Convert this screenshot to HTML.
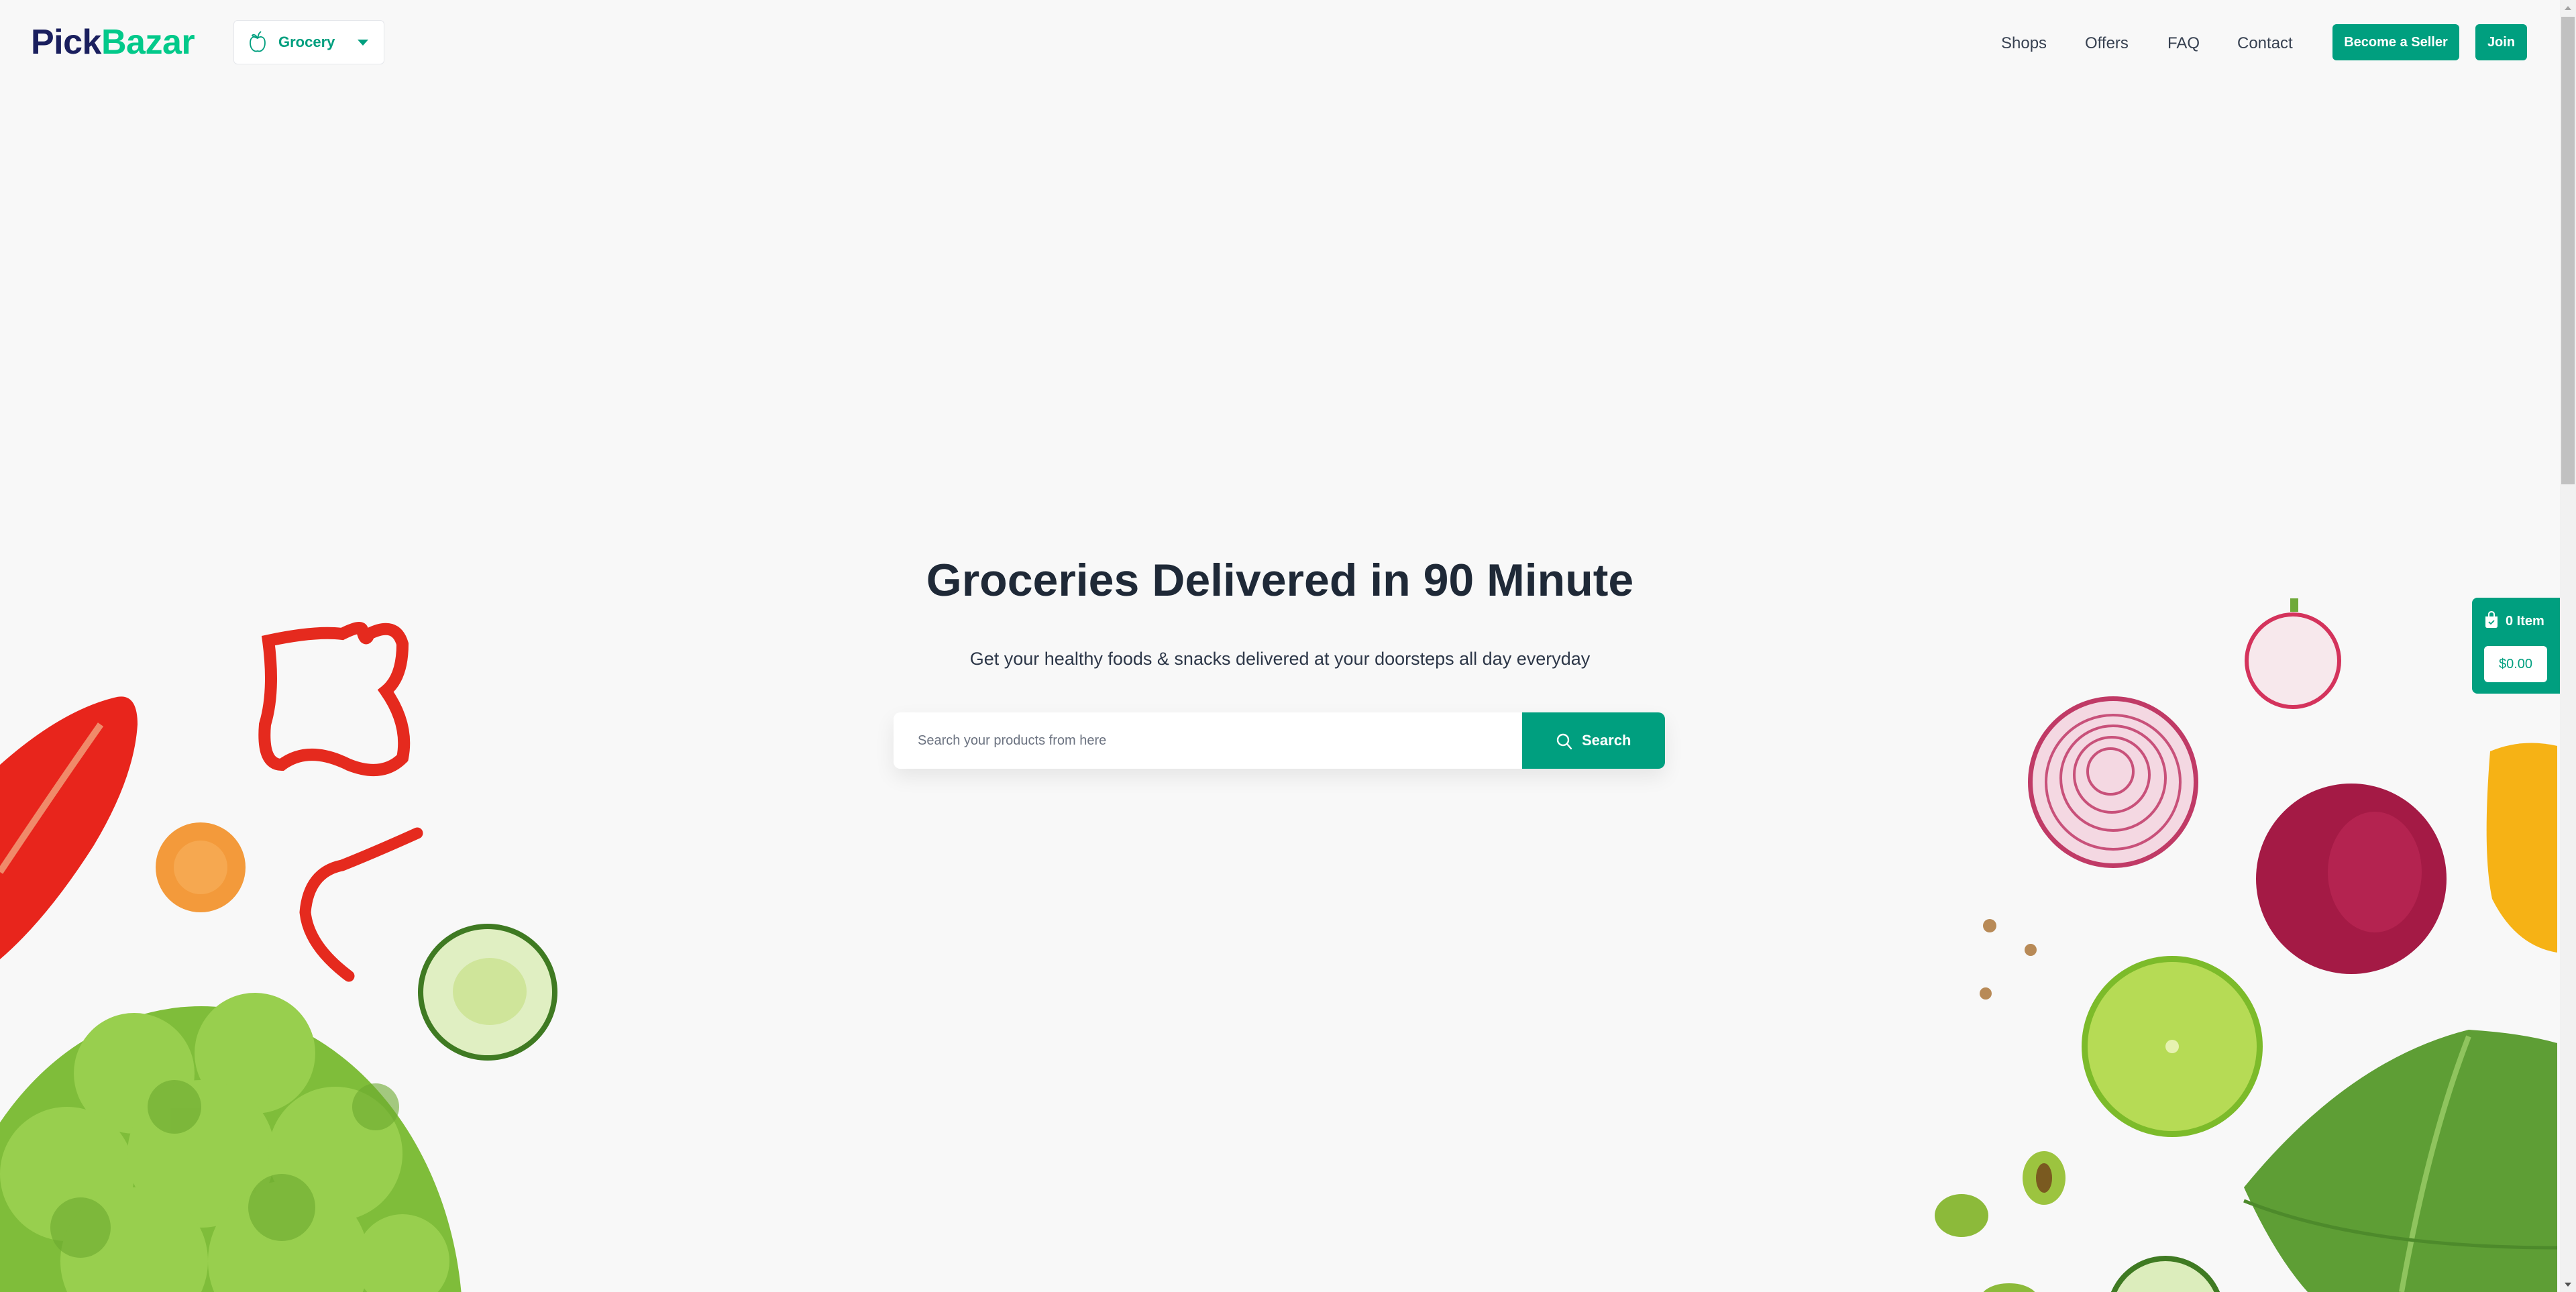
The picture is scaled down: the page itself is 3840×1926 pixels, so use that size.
<!DOCTYPE html>
<html><head><meta charset="utf-8"><style>
html,body{margin:0;padding:0;overflow:hidden;}
body{width:3840px;height:1926px;overflow:hidden;background:#f8f8f8;font-family:"Liberation Sans",sans-serif;position:relative;}
.abs{position:absolute;}
.nav{position:absolute;top:50px;font-size:24px;color:#374151;line-height:30px;}
.btn{position:absolute;top:36px;height:54px;background:#009f7f;border-radius:6px;color:#fff;font-weight:bold;font-size:20px;line-height:54px;text-align:center;}
</style></head><body>
<svg class="abs" style="left:0;top:0;display:block" width="3816" height="1926" viewBox="0 0 3816 1926">
<!-- left side -->
<path d="M0 1140 Q90 1060 170 1040 Q205 1030 205 1080 Q200 1160 140 1260 Q70 1370 0 1430 Z" fill="#e8251c"/>
<path d="M0 1300 Q80 1180 150 1080" stroke="#f08a6a" stroke-width="10" fill="none"/>
<path d="M400 955 Q470 940 510 945 Q540 930 540 940 Q545 960 550 945 Q590 925 600 960 Q600 1010 575 1030 Q610 1080 600 1130 Q570 1160 520 1140 Q460 1110 420 1140 Q390 1140 395 1080 Q410 1030 400 955 Z" fill="none" stroke="#e52a1e" stroke-width="18"/>
<circle cx="299" cy="1293" r="67" fill="#f39a3b"/>
<circle cx="299" cy="1293" r="40" fill="#f6a850"/>
<path d="M622 1242 Q560 1270 510 1290 Q460 1300 455 1360 Q460 1410 520 1455" stroke="#e52a1e" stroke-width="17" fill="none" stroke-linecap="round"/>
<ellipse cx="727" cy="1479" rx="104" ry="102" fill="#3f7a22"/>
<ellipse cx="727" cy="1479" rx="96" ry="94" fill="#e0efc2"/>
<ellipse cx="730" cy="1478" rx="55" ry="50" fill="#cfe59a"/>
<ellipse cx="300" cy="1980" rx="390" ry="480" fill="#7fbd3a"/>
<g fill="#98cf4e">
<circle cx="200" cy="1600" r="90"/><circle cx="380" cy="1570" r="90"/><circle cx="100" cy="1750" r="100"/><circle cx="300" cy="1720" r="110"/><circle cx="500" cy="1720" r="100"/><circle cx="200" cy="1880" r="110"/><circle cx="430" cy="1880" r="120"/><circle cx="600" cy="1880" r="70"/></g>
<g fill="#6aa82e" opacity=".6"><circle cx="260" cy="1650" r="40"/><circle cx="420" cy="1800" r="50"/><circle cx="120" cy="1830" r="45"/><circle cx="560" cy="1650" r="35"/></g>
<!-- right side -->
<circle cx="3418" cy="985" r="72" fill="#d4335c"/>
<circle cx="3418" cy="985" r="66" fill="#f7e8ec"/>
<path d="M3420 912 l0 -20" stroke="#6fa93a" stroke-width="12"/>
<ellipse cx="3150" cy="1166" rx="127" ry="128" fill="#c03a66"/>
<ellipse cx="3150" cy="1166" rx="120" ry="121" fill="#f4d8e2"/>
<g fill="none" stroke="#c8517a" stroke-width="4"><ellipse cx="3150" cy="1166" rx="100" ry="100"/><ellipse cx="3150" cy="1160" rx="78" ry="78"/><ellipse cx="3148" cy="1155" rx="56" ry="56"/><ellipse cx="3146" cy="1150" rx="34" ry="34"/></g>
<ellipse cx="3505" cy="1310" rx="142" ry="142" fill="#a41a45"/>
<ellipse cx="3540" cy="1300" rx="70" ry="90" fill="#c02a58" opacity=".6"/>
<path d="M3712 1120 Q3760 1100 3812 1112 L3812 1420 Q3750 1410 3715 1340 Q3700 1270 3712 1120 Z" fill="#f6b215"/>
<circle cx="3238" cy="1560" r="135" fill="#7cbb2a"/>
<circle cx="3238" cy="1560" r="126" fill="#b6db55"/>
<circle cx="3238" cy="1560" r="10" fill="#e6f2b0"/>
<path d="M3345 1770 Q3500 1580 3680 1535 Q3760 1540 3812 1555 L3812 1926 L3440 1926 Q3390 1870 3345 1770 Z" fill="#5e9e35"/>
<path d="M3680 1545 Q3620 1700 3580 1926" stroke="#8fc45e" stroke-width="8" fill="none"/>
<path d="M3345 1790 Q3520 1860 3812 1860" stroke="#4d8a2b" stroke-width="5" fill="none"/>
<ellipse cx="2924" cy="1812" rx="40" ry="32" fill="#8cba3a"/>
<ellipse cx="3047" cy="1756" rx="32" ry="40" fill="#9cc43f"/>
<ellipse cx="3047" cy="1756" rx="12" ry="22" fill="#7a5a20"/>
<circle cx="2966" cy="1380" r="10" fill="#b88a57"/><circle cx="3027" cy="1416" r="9" fill="#b88a57"/><circle cx="2960" cy="1481" r="9" fill="#b88a57"/>
<circle cx="3228" cy="1960" r="88" fill="#3f7a22"/><circle cx="3228" cy="1960" r="80" fill="#dcedbc"/>
<ellipse cx="2995" cy="1935" rx="42" ry="22" fill="#8cba3a"/>
</svg>

<!-- header -->
<div class="abs" style="left:46px;top:32px;font-size:52px;font-weight:bold;letter-spacing:-0.5px;line-height:62px;"><span style="color:#1a1f5e">Pick</span><span style="color:#02c98a">Bazar</span></div>
<div class="abs" style="left:348px;top:30px;width:223px;height:64px;background:#fff;border:1px solid #e5e7eb;border-radius:6px;">
<svg class="abs" style="left:22px;top:14px" width="26" height="34" viewBox="0 0 26 34"><path d="M13 12 C8 8 2 10 2 19 C2 27 7 33 13 31 C19 33 24 27 24 19 C24 10 18 8 13 12 Z M13 12 L15 5 M13 12 C10 6 6 6 5 8 C8 11 11 11 13 12 M15 5 L18 2" fill="none" stroke="#009f7f" stroke-width="1.8"/></svg>
<span class="abs" style="left:66px;top:17px;font-size:22px;font-weight:bold;color:#009f7f;line-height:30px">Grocery</span>
<div class="abs" style="left:184px;top:28px;width:0;height:0;border-left:8px solid transparent;border-right:8px solid transparent;border-top:9px solid #009f7f"></div>
</div>
<div class="nav" style="left:2983px">Shops</div>
<div class="nav" style="left:3108px">Offers</div>
<div class="nav" style="left:3231px">FAQ</div>
<div class="nav" style="left:3335px">Contact</div>
<div class="btn" style="left:3477px;width:189px">Become a Seller</div>
<div class="btn" style="left:3690px;width:77px">Join</div>

<!-- scrollbar -->
<div class="abs" style="left:3816px;top:0;width:24px;height:1926px;background:#f1f1f1"></div>
<div class="abs" style="left:3818px;top:25px;width:20px;height:697px;background:#c1c1c1"></div>
<div class="abs" style="left:3823px;top:9px;width:0;height:0;border-left:5px solid transparent;border-right:5px solid transparent;border-bottom:6px solid #a3a3a3"></div>
<div class="abs" style="left:3823px;top:1912px;width:0;height:0;border-left:5px solid transparent;border-right:5px solid transparent;border-top:6px solid #505050"></div>

<!-- hero -->
<div class="abs" style="left:0;width:3816px;top:823px;text-align:center;font-size:68px;font-weight:bold;color:#1f2937;line-height:84px;">Groceries Delivered in 90 Minute</div>
<div class="abs" style="left:0;width:3816px;top:965px;text-align:center;font-size:27px;color:#2d3748;line-height:34px;">Get your healthy foods &amp; snacks delivered at your doorsteps all day everyday</div>
<div class="abs" style="left:1332px;top:1062px;width:1150px;height:84px;background:#fff;border-radius:10px;box-shadow:0 12px 30px rgba(0,0,0,.08);">
<span class="abs" style="left:36px;top:28px;font-size:20px;color:#6b7280;line-height:28px">Search your products from here</span>
<div class="abs" style="left:937px;top:0;width:213px;height:84px;background:#009f7f;border-radius:0 10px 10px 0;">
<svg class="abs" style="left:51px;top:31px" width="24" height="25" viewBox="0 0 24 25"><circle cx="10" cy="10" r="8" fill="none" stroke="#fff" stroke-width="2.4"/><path d="M16 16 L22 23" stroke="#fff" stroke-width="2.4" stroke-linecap="round"/></svg>
<span class="abs" style="left:89px;top:27px;font-size:22px;font-weight:bold;color:#fff;line-height:30px">Search</span>
</div></div>

<!-- cart -->
<div class="abs" style="left:3685px;top:891px;width:131px;height:143px;background:#009f7f;border-radius:8px 0 0 8px;">
<svg class="abs" style="left:19px;top:20px" width="20" height="26" viewBox="0 0 20 26"><path d="M1 8 H19 V22 Q19 25 16 25 H4 Q1 25 1 22 Z" fill="#fff"/><path d="M6 9 V5 Q6 1 10 1 Q14 1 14 5 V9" fill="none" stroke="#fff" stroke-width="2"/><path d="M6 16 l3 3 l5 -5" stroke="#009f7f" stroke-width="1.8" fill="none"/></svg>
<span class="abs" style="left:50px;top:21px;font-size:20px;font-weight:bold;color:#fff;line-height:28px">0 Item</span>
<div class="abs" style="left:18px;top:72px;width:94px;height:54px;background:#fff;border-radius:6px;text-align:center;line-height:54px;font-size:20px;color:#009f7f">$0.00</div>
</div>
</body></html>
